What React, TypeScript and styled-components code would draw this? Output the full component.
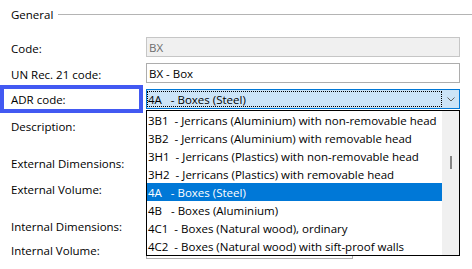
import React from "react";
import styled, { createGlobalStyle } from "styled-components";

const GlobalStyle = createGlobalStyle`
  html, body { margin: 0; padding: 0; background: #ffffff; }
  body { font-family: "Open Sans", "Noto Sans", sans-serif; font-size: 11.5px; color: #000; }
  * { box-sizing: border-box; }
`;

const Page = styled.div`
  position: relative;
  width: 472px;
  height: 269px;
  overflow: hidden;
  background: #fff;
`;

const GroupHeader = styled.div`
  display: flex;
  align-items: center;
  gap: 5px;
  height: 16px;
  margin-top: 6px;
  padding-left: 11px;
`;

const GroupTitle = styled.span`
  line-height: 16px;
  padding-top: 2px;
`;

const GroupLine = styled.div`
  flex: 1;
  height: 1px;
  background: #b4b4b4;
`;

const Form = styled.div`
  display: flex;
  flex-direction: column;
  margin-top: 15px;
`;

const Row = styled.div<{ $gap: number }>`
  display: grid;
  grid-template-columns: 146px 314px;
  align-items: start;
  height: 20px;
  margin-top: ${(p) => p.$gap}px;
`;

const Label = styled.div<{ $highlight?: boolean }>`
  padding-left: ${(p) => (p.$highlight ? 7 : 11)}px;
  padding-top: ${(p) => (p.$highlight ? 1 : 2)}px;
  line-height: 20px;
  height: 20px;
  white-space: nowrap;
  ${(p) =>
    p.$highlight
      ? `
    width: 143px;
    height: 28px;
    margin-top: -4px;
    border: 4px solid #4259f2;
  `
      : ""}
`;

const TextBox = styled.div<{ $disabled?: boolean; $width?: number }>`
  width: ${(p) => p.$width ?? 314}px;
  height: 20px;
  border: 1px solid ${(p) => (p.$disabled ? "#c6c6c6" : "#adadad")};
  background: ${(p) => (p.$disabled ? "#f0f0f0" : "#fff")};
  color: ${(p) => (p.$disabled ? "#6d6d6d" : "#000")};
  padding: 1px 0 0 2px;
  line-height: 18px;
  white-space: pre;
`;

const Combo = styled.div`
  display: flex;
  align-items: center;
  width: 314px;
  height: 20px;
  border: 1px solid #0078d7;
  background: #cce4f7;
  padding: 1px 0;
`;

const FocusText = styled.div`
  flex: 1;
  height: 16px;
  border: 1px dotted #000;
  padding-top: 1px;
  line-height: 14px;
  white-space: pre;
`;

const ChevronBox = styled.div`
  width: 17px;
  display: flex;
  align-items: center;
  justify-content: center;
`;

const DropList = styled.div`
  position: absolute;
  left: 146px;
  top: 110px;
  width: 314px;
  height: 146px;
  border: 1px solid #000;
  background: #fff;
  display: flex;
`;

const Items = styled.div`
  flex: 1;
  display: flex;
  flex-direction: column;
`;

const Item = styled.div<{ $selected?: boolean }>`
  height: 18px;
  line-height: 18px;
  padding: 1px 0 0 1px;
  white-space: pre;
  background: ${(p) => (p.$selected ? "#0078d7" : "transparent")};
  color: ${(p) => (p.$selected ? "#fff" : "#000")};
`;

const ScrollTrack = styled.div`
  position: relative;
  width: 17px;
  background: #f0f0f0;
`;

const ScrollThumb = styled.div`
  position: absolute;
  left: 8px;
  top: 45px;
  width: 2px;
  height: 13px;
  background: #858585;
`;

const items = [
  "3B1  - Jerricans (Aluminium) with non-removable head",
  "3B2  - Jerricans (Aluminium) with removable head",
  "3H1  - Jerricans (Plastics) with non-removable head",
  "3H2  - Jerricans (Plastics) with removable head",
  "4A   - Boxes (Steel)",
  "4B   - Boxes (Aluminium)",
  "4C1  - Boxes (Natural wood), ordinary",
  "4C2  - Boxes (Natural wood) with sift-proof walls",
];

export default function App() {
  return (
    <Page>
      <GlobalStyle />
      <GroupHeader>
        <GroupTitle>General</GroupTitle>
        <GroupLine />
      </GroupHeader>
      <Form>
        <Row $gap={0}>
          <Label>Code:</Label>
          <TextBox $disabled>BX</TextBox>
        </Row>
        <Row $gap={6}>
          <Label>UN Rec. 21 code:</Label>
          <TextBox>BX - Box</TextBox>
        </Row>
        <Row $gap={6}>
          <Label $highlight>ADR code:</Label>
          <Combo>
            <FocusText>4A   - Boxes (Steel)</FocusText>
            <ChevronBox>
              <svg width="8" height="5" viewBox="0 0 8 5">
                <path d="M0.5 0.5 L4 4 L7.5 0.5" fill="none" stroke="#606060" strokeWidth="1" />
              </svg>
            </ChevronBox>
          </Combo>
        </Row>
        <Row $gap={6}>
          <Label>Description:</Label>
          <TextBox />
        </Row>
        <Row $gap={17}>
          <Label>External Dimensions:</Label>
          <TextBox $width={207} />
        </Row>
        <Row $gap={6}>
          <Label>External Volume:</Label>
          <TextBox $width={207} />
        </Row>
        <Row $gap={17}>
          <Label>Internal Dimensions:</Label>
          <TextBox $width={207} />
        </Row>
        <Row $gap={4}>
          <Label>Internal Volume:</Label>
          <TextBox $width={207} />
        </Row>
      </Form>
      <DropList>
        <Items>
          {items.map((t, i) => (
            <Item key={t} $selected={i === 4}>
              {t}
            </Item>
          ))}
        </Items>
        <ScrollTrack>
          <ScrollThumb />
        </ScrollTrack>
      </DropList>
    </Page>
  );
}
